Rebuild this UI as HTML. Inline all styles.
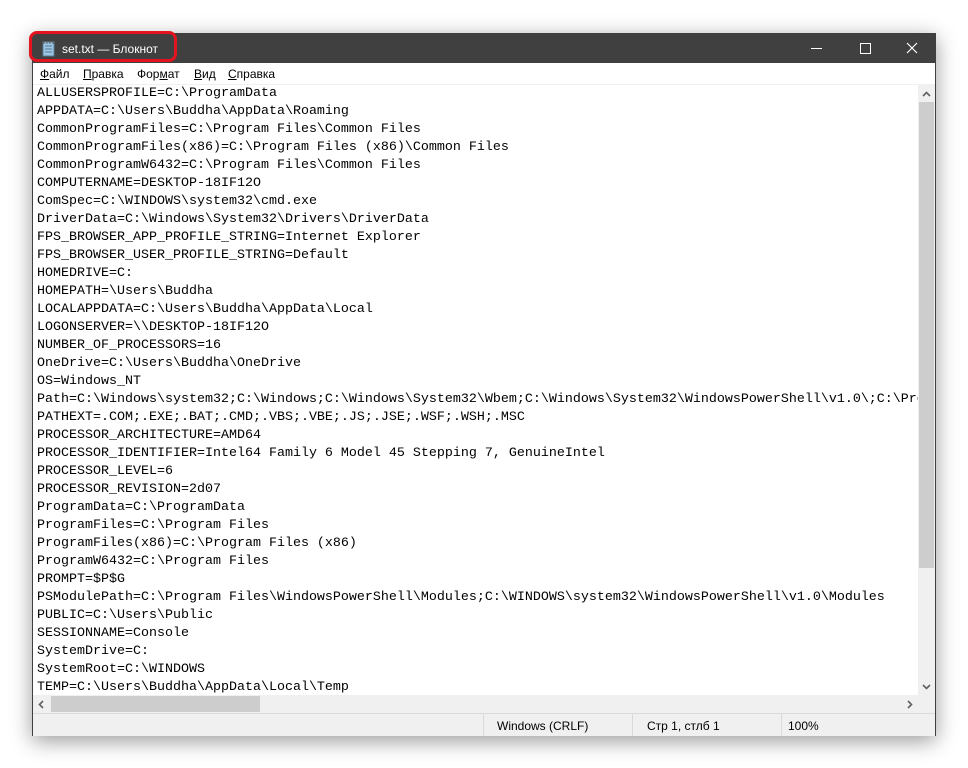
<!DOCTYPE html>
<html><head><meta charset="utf-8"><style>
body{margin:0;width:968px;height:768px;background:#fff;position:relative;overflow:hidden;font-family:"Liberation Sans","Noto Sans CJK SC",sans-serif}
.win{position:absolute;left:32px;top:33px;width:902px;height:701px;border:1px solid #3f3f3f;background:#f0f0f0;box-shadow:0 5px 20px rgba(0,0,0,.4)}
.title{position:absolute;left:0;top:0;width:902px;height:29px;background:#404040;color:#fff;font-size:12px}
.ring{position:absolute;left:-4px;top:-3px;width:142px;height:25px;border:3px solid #e3141f;border-radius:8px}
.menu{position:absolute;left:0;top:29px;width:902px;height:21px;background:#fff;font-size:12px}
.menu span{position:absolute;top:4px}
.text{position:absolute;left:0;top:51px;width:885px;height:610px;background:#fff;overflow:hidden}
pre{margin:0;position:absolute;left:4px;top:0;font-family:"Liberation Mono",monospace;font-size:13.33px;line-height:18px;color:#000}
.vs{position:absolute;left:885px;top:51px;width:17px;height:610px;background:#f0f0f0}
.hs{position:absolute;left:0;top:661px;width:885px;height:18px;background:#f0f0f0}
.status{position:absolute;left:0;top:679px;width:902px;height:22px;background:#f0f0f0;border-top:1px solid #dadada;font-size:12px;color:#000}
.status span{position:absolute;top:5px}
.sep{position:absolute;top:0;width:1px;height:22px;background:#dadada}
</style></head><body>
<div class="win">
<div class="title">
<div class="ring"></div>
<svg style="position:absolute;left:9px;top:6px" width="14" height="17"><rect x="1" y="2" width="11" height="14" fill="#9cc6e6" stroke="#5a7a90"/><path d="M3 6h7M3 9h7M3 12h7" stroke="#5a7a90"/><path d="M2 1v3M5 1v3M8 1v3M11 1v3" stroke="#666"/></svg>
<span style="position:absolute;left:29px;top:8px">set.txt — Блокнот</span>
<div style="position:absolute;left:778px;top:14px;width:11px;height:1px;background:#fff"></div>
<div style="position:absolute;left:827px;top:9px;width:9px;height:9px;border:1px solid #fff"></div>
<svg style="position:absolute;left:873px;top:8px" width="12" height="12"><path d="M1 1L11 11M11 1L1 11" stroke="#fff" stroke-width="1.2"/></svg>
</div>
<div class="menu">
<span style="left:7px"><u>Ф</u>айл</span><span style="left:50px"><u>П</u>равка</span><span style="left:104px">Фор<u>м</u>ат</span><span style="left:161px"><u>В</u>ид</span><span style="left:195px"><u>С</u>правка</span>
</div>
<div class="text"><pre>ALLUSERSPROFILE=C:\ProgramData
APPDATA=C:\Users\Buddha\AppData\Roaming
CommonProgramFiles=C:\Program Files\Common Files
CommonProgramFiles(x86)=C:\Program Files (x86)\Common Files
CommonProgramW6432=C:\Program Files\Common Files
COMPUTERNAME=DESKTOP-18IF12O
ComSpec=C:\WINDOWS\system32\cmd.exe
DriverData=C:\Windows\System32\Drivers\DriverData
FPS_BROWSER_APP_PROFILE_STRING=Internet Explorer
FPS_BROWSER_USER_PROFILE_STRING=Default
HOMEDRIVE=C:
HOMEPATH=\Users\Buddha
LOCALAPPDATA=C:\Users\Buddha\AppData\Local
LOGONSERVER=\\DESKTOP-18IF12O
NUMBER_OF_PROCESSORS=16
OneDrive=C:\Users\Buddha\OneDrive
OS=Windows_NT
Path=C:\Windows\system32;C:\Windows;C:\Windows\System32\Wbem;C:\Windows\System32\WindowsPowerShell\v1.0\;C:\Program Files
PATHEXT=.COM;.EXE;.BAT;.CMD;.VBS;.VBE;.JS;.JSE;.WSF;.WSH;.MSC
PROCESSOR_ARCHITECTURE=AMD64
PROCESSOR_IDENTIFIER=Intel64 Family 6 Model 45 Stepping 7, GenuineIntel
PROCESSOR_LEVEL=6
PROCESSOR_REVISION=2d07
ProgramData=C:\ProgramData
ProgramFiles=C:\Program Files
ProgramFiles(x86)=C:\Program Files (x86)
ProgramW6432=C:\Program Files
PROMPT=$P$G
PSModulePath=C:\Program Files\WindowsPowerShell\Modules;C:\WINDOWS\system32\WindowsPowerShell\v1.0\Modules
PUBLIC=C:\Users\Public
SESSIONNAME=Console
SystemDrive=C:
SystemRoot=C:\WINDOWS
TEMP=C:\Users\Buddha\AppData\Local\Temp</pre></div>
<div class="vs">
<svg style="position:absolute;left:4px;top:6px" width="9" height="6"><path d="M1 5L4.5 1.5L8 5" stroke="#606060" stroke-width="1.6" fill="none"/></svg>
<div style="position:absolute;left:1px;top:17px;width:15px;height:466px;background:#cdcdcd"></div>
<svg style="position:absolute;left:4px;top:599px" width="9" height="6"><path d="M1 1L4.5 4.5L8 1" stroke="#606060" stroke-width="1.6" fill="none"/></svg>
</div>
<div class="hs">
<svg style="position:absolute;left:5px;top:5px" width="6" height="9"><path d="M5 1L1.5 4.5L5 8" stroke="#606060" stroke-width="1.6" fill="none"/></svg>
<div style="position:absolute;left:18px;top:1px;width:209px;height:16px;background:#cdcdcd"></div>
<svg style="position:absolute;left:874px;top:5px" width="6" height="9"><path d="M1 1L4.5 4.5L1 8" stroke="#606060" stroke-width="1.6" fill="none"/></svg>
</div>
<div class="status">
<div class="sep" style="left:450px"></div><div class="sep" style="left:599px"></div><div class="sep" style="left:748px"></div>
<span style="left:464px">Windows (CRLF)</span><span style="left:614px">Стр 1, стлб 1</span><span style="left:755px">100%</span>
</div>
</div>
</body></html>
